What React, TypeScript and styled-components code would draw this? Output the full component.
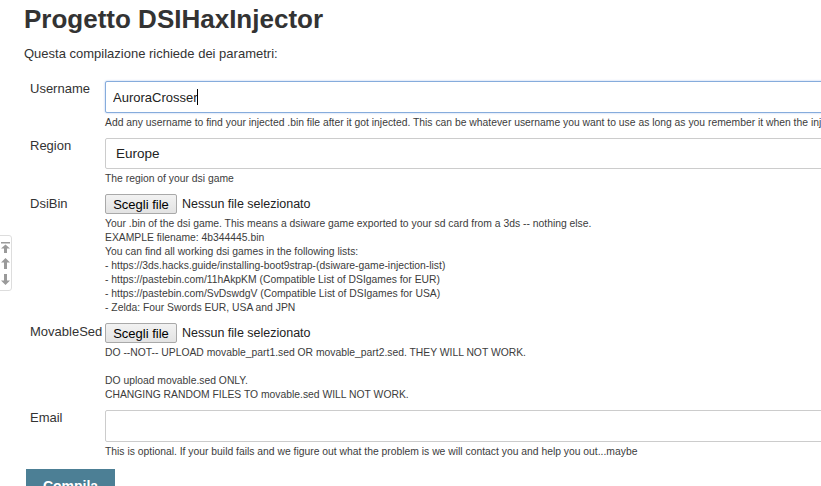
import React from "react";
import styled, { createGlobalStyle } from "styled-components";

const Global = createGlobalStyle`
  html, body {
    margin: 0;
    padding: 0;
    overflow: hidden;
    background: #ffffff;
  }
  body {
    font-family: "Liberation Sans", Arial, sans-serif;
    color: #333333;
  }
`;

const Page = styled.div`
  width: 1200px;
  padding-left: 24px;
  box-sizing: border-box;
`;

const Title = styled.h1`
  margin: 4px 0 0;
  font-size: 26px;
  line-height: 30px;
  font-weight: bold;
  color: #333333;
`;

const Intro = styled.p`
  margin: 12px 0 0;
  font-size: 13px;
  line-height: 15px;
  color: #333333;
`;

const Form = styled.form`
  margin-top: 20px;
  padding-left: 6px;
  display: flex;
  flex-direction: column;
  gap: 8px;
`;

const Row = styled.div`
  display: grid;
  grid-template-columns: 75px 1fr;
  align-items: start;
`;

const Label = styled.label<{ $offset?: number }>`
  font-size: 13px;
  line-height: 15px;
  color: #333333;
  padding-top: ${(p) => p.$offset ?? 0}px;
  white-space: nowrap;
`;

const Field = styled.div`
  display: flex;
  flex-direction: column;
  min-width: 0;
`;

const InputWrap = styled.div`
  position: relative;
`;

const TextInput = styled.input<{ $focused?: boolean }>`
  box-sizing: border-box;
  width: 100%;
  height: 32px;
  margin: 0;
  padding: 0 7px;
  font-family: "Liberation Sans", Arial, sans-serif;
  font-size: 13px;
  color: #222222;
  background: #ffffff;
  border: 1px solid ${(p) => (p.$focused ? "#86acdc" : "#cccccc")};
  border-radius: 2px;
  box-shadow: ${(p) =>
    p.$focused ? "0 0 2px rgba(102, 150, 220, 0.6)" : "none"};
  outline: none;
`;

const Caret = styled.span`
  position: absolute;
  left: 92px;
  top: 8px;
  width: 1px;
  height: 16px;
  background: #000000;
`;

const Select = styled.select`
  box-sizing: border-box;
  width: 100%;
  height: 31px;
  margin: 0;
  padding: 0 0 0 10px;
  font-family: "Liberation Sans", Arial, sans-serif;
  font-size: 13.5px;
  color: #222222;
  background: #ffffff;
  border: 1px solid #cccccc;
  border-radius: 2px;
  appearance: none;
  -webkit-appearance: none;
  outline: none;
`;

const FileLine = styled.div`
  display: flex;
  align-items: center;
  height: 20px;
  gap: 5px;
`;

const FileButton = styled.button`
  box-sizing: border-box;
  height: 20px;
  width: 72px;
  margin: 0;
  padding: 0;
  font-family: "Liberation Sans", Arial, sans-serif;
  font-size: 13px;
  color: #000000;
  background: linear-gradient(#f2f2f2, #e3e3e3);
  border: 1px solid #a9a9a9;
  border-radius: 2px;
`;

const FileName = styled.span`
  font-size: 12.5px;
  color: #222222;
`;

const Help = styled.div`
  margin-top: 3px;
  font-size: 10.35px;
  line-height: 14px;
  color: #3c3c3c;
  white-space: pre;
`;

const Submit = styled.button`
  margin: 10px 0 0 2px;
  width: 89px;
  height: 34px;
  padding: 0;
  border: none;
  background: #4c7f95;
  color: #ffffff;
  font-family: "Liberation Sans", Arial, sans-serif;
  font-size: 14px;
  font-weight: bold;
`;

const ScrollTool = styled.div`
  position: fixed;
  left: -1px;
  top: 235px;
  width: 13px;
  height: 56px;
  box-sizing: border-box;
  border: 1px solid #dddddd;
  border-radius: 0 3px 3px 0;
  background: #ffffff;
  display: flex;
  flex-direction: column;
  align-items: center;
  justify-content: space-around;
  padding: 3px 0;
`;

const ArrowIcon = ({ kind }: { kind: "top" | "up" | "down" }) => {
  const d =
    kind === "top"
      ? "M0 0 H9 V1.6 H0 Z M4.5 2.4 L9 6.6 H6 V11 H3 V6.6 H0 Z"
      : kind === "up"
      ? "M4.5 0 L9 4.6 H6 V11 H3 V4.6 H0 Z"
      : "M4.5 11 L9 6.4 H6 V0 H3 V6.4 H0 Z";
  return (
    <svg width="9" height="11" viewBox="0 0 9 11">
      <path d={d} fill="#9a9a9a" />
    </svg>
  );
};

const dsiHelp = [
  "Your .bin of the dsi game. This means a dsiware game exported to your sd card from a 3ds -- nothing else.",
  "EXAMPLE filename: 4b344445.bin",
  "You can find all working dsi games in the following lists:",
  "- https://3ds.hacks.guide/installing-boot9strap-(dsiware-game-injection-list)",
  "- https://pastebin.com/11hAkpKM (Compatible List of DSIgames for EUR)",
  "- https://pastebin.com/SvDswdgV (Compatible List of DSIgames for USA)",
  "- Zelda: Four Swords EUR, USA and JPN",
].join("\n");

const movableHelp = [
  "DO --NOT-- UPLOAD movable_part1.sed OR movable_part2.sed. THEY WILL NOT WORK.",
  " ",
  "DO upload movable.sed ONLY.",
  "CHANGING RANDOM FILES TO movable.sed WILL NOT WORK.",
].join("\n");

export default function App() {
  return (
    <>
      <Global />
      <Page>
        <Title>Progetto DSIHaxInjector</Title>
        <Intro>Questa compilazione richiede dei parametri:</Intro>
        <Form onSubmit={(e) => e.preventDefault()}>
          <Row>
            <Label>Username</Label>
            <Field>
              <InputWrap>
                <TextInput $focused readOnly value="AuroraCrosser" />
                <Caret />
              </InputWrap>
              <Help>
                Add any username to find your injected .bin file after it got
                injected. This can be whatever username you want to use as long
                as you remember it when the injection is done.
              </Help>
            </Field>
          </Row>
          <Row>
            <Label>Region</Label>
            <Field>
              <Select defaultValue="Europe">
                <option>Europe</option>
                <option>USA</option>
                <option>Japan</option>
              </Select>
              <Help>The region of your dsi game</Help>
            </Field>
          </Row>
          <Row>
            <Label $offset={2}>DsiBin</Label>
            <Field>
              <FileLine>
                <FileButton type="button">Scegli file</FileButton>
                <FileName>Nessun file selezionato</FileName>
              </FileLine>
              <Help>{dsiHelp}</Help>
            </Field>
          </Row>
          <Row>
            <Label $offset={1}>MovableSed</Label>
            <Field>
              <FileLine>
                <FileButton type="button">Scegli file</FileButton>
                <FileName>Nessun file selezionato</FileName>
              </FileLine>
              <Help>{movableHelp}</Help>
            </Field>
          </Row>
          <Row>
            <Label>Email</Label>
            <Field>
              <TextInput readOnly value="" />
              <Help>
                This is optional. If your build fails and we figure out what the
                problem is we will contact you and help you out...maybe
              </Help>
            </Field>
          </Row>
        </Form>
        <Submit type="button">Compila</Submit>
      </Page>
      <ScrollTool>
        <ArrowIcon kind="top" />
        <ArrowIcon kind="up" />
        <ArrowIcon kind="down" />
      </ScrollTool>
    </>
  );
}
